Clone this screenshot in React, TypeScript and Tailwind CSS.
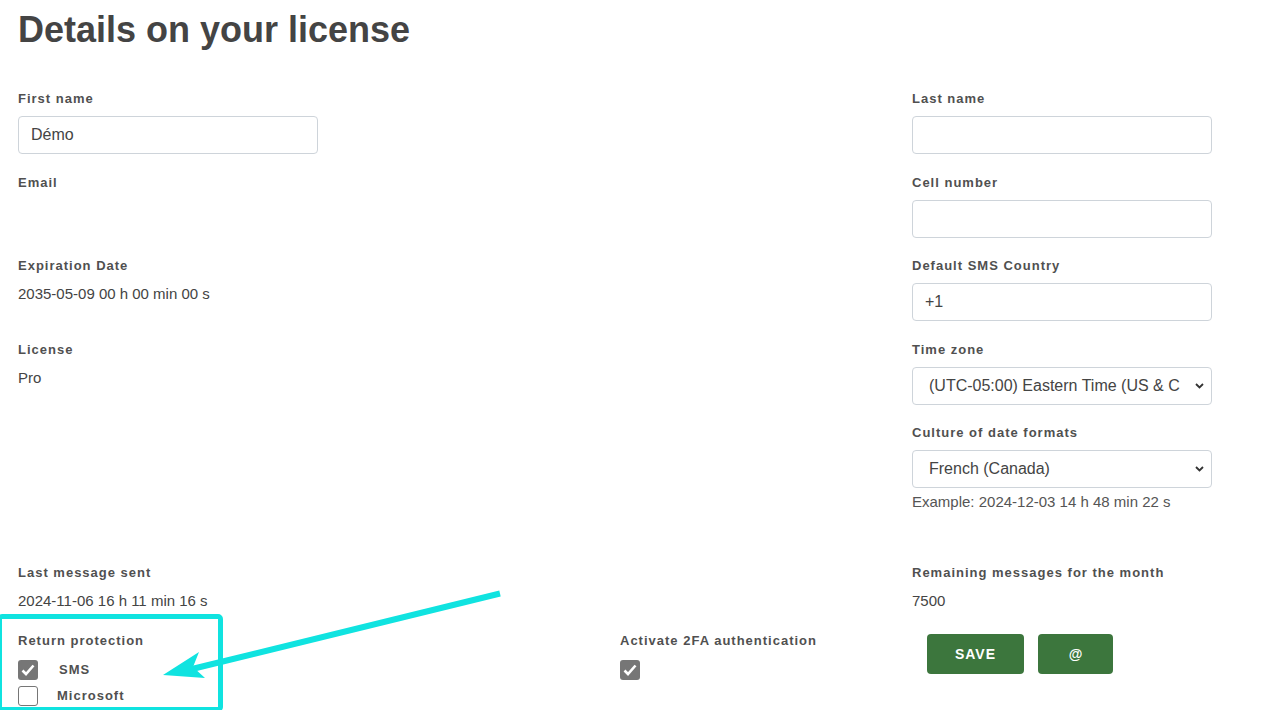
import React from 'react';

const FONT = 'font-["Liberation_Sans",Arial,sans-serif]';

function Label({ children, className = '' }: { children: React.ReactNode; className?: string }) {
  return (
    <div className={`text-[13px] leading-[18px] font-bold tracking-[1px] text-[#505050] ${className}`}>
      {children}
    </div>
  );
}

function TextInput({ value = '' }: { value?: string }) {
  return (
    <div className="h-[38px] w-[300px] rounded-[4px] border border-[#ced4da] bg-white px-[12px] flex items-center text-[16px] text-[#444]">
      {value}
    </div>
  );
}

function Chevron() {
  return (
    <svg width="9" height="6" viewBox="0 0 9 6" className="shrink-0">
      <path d="M1 1 L4.5 4.5 L8 1" fill="none" stroke="#333" strokeWidth="1.8" />
    </svg>
  );
}

function Select({ value }: { value: string }) {
  return (
    <div className="h-[38px] w-[300px] rounded-[4px] border border-[#ced4da] bg-white pl-[16px] pr-[7px] flex items-center text-[16px] text-[#444]">
      <div className="flex-1 overflow-hidden whitespace-nowrap mr-[15px]">{value}</div>
      <Chevron />
    </div>
  );
}

function Checkbox({ checked }: { checked: boolean }) {
  if (checked) {
    return (
      <div className="w-[20px] h-[20px] rounded-[3px] bg-[#767676] flex items-center justify-center shrink-0">
        <svg width="14" height="12" viewBox="0 0 14 12">
          <path d="M1.5 6.5 L5 10 L12.5 1.5" fill="none" stroke="#fff" strokeWidth="2.6" />
        </svg>
      </div>
    );
  }
  return <div className="w-[20px] h-[20px] rounded-[3px] border border-[#767676] bg-white shrink-0" />;
}

function Value({ children }: { children: React.ReactNode }) {
  return <div className="text-[15px] leading-[22px] text-[#444]">{children}</div>;
}

function Row({ left, right }: { left: React.ReactNode; right: React.ReactNode }) {
  return (
    <div className="flex pb-[19.5px]">
      <div className="w-[894px]">{left}</div>
      <div className="w-[300px]">{right}</div>
    </div>
  );
}

export default function App() {
  return (
    <div className={`relative min-h-[710px] overflow-hidden bg-white text-[#444] ${FONT}`}>
      <div className="pl-[18px]">
        <h1 className="pt-[9px] text-[36px] leading-[42px] font-bold text-[#444]">Details on your license</h1>

        <div className="pt-[39px]">
          <Row
            left={<><Label className="mb-[8px]">First name</Label><TextInput value="Démo" /></>}
            right={<><Label className="mb-[8px]">Last name</Label><TextInput /></>}
          />
          <Row
            left={<Label>Email</Label>}
            right={<><Label className="mb-[8px]">Cell number</Label><TextInput /></>}
          />
          <Row
            left={<><Label className="mb-[8px]">Expiration Date</Label><Value>2035-05-09 00 h 00 min 00 s</Value></>}
            right={<><Label className="mb-[8px]">Default SMS Country</Label><TextInput value="+1" /></>}
          />
          <Row
            left={<><Label className="mb-[8px]">License</Label><Value>Pro</Value></>}
            right={<><Label className="mb-[8px]">Time zone</Label><Select value="(UTC-05:00) Eastern Time (US & Canada)" /></>}
          />
          <div className="flex">
            <div className="w-[894px]" />
            <div className="w-[300px]">
              <Label className="mb-[8px]">Culture of date formats</Label>
              <Select value="French (Canada)" />
              <div className="mt-[3px] text-[15px] leading-[22px] text-[#555]">Example: 2024-12-03 14 h 48 min 22 s</div>
            </div>
          </div>

          <div className="flex pt-[51px]">
            <div className="w-[894px]">
              <Label className="mb-[8px]">Last message sent</Label>
              <Value>2024-11-06 16 h 11 min 16 s</Value>
            </div>
            <div className="w-[300px]">
              <Label className="mb-[8px]">Remaining messages for the month</Label>
              <Value>7500</Value>
            </div>
          </div>

          <div className="flex pt-[20px]">
            <div className="w-[602px]">
              <Label className="mb-[10px]">Return protection</Label>
              <div className="flex items-center h-[20px]">
                <Checkbox checked />
                <span className="ml-[21px] text-[13px] font-bold tracking-[1px] text-[#505050]">SMS</span>
              </div>
              <div className="flex items-center h-[20px] mt-[6px]">
                <Checkbox checked={false} />
                <span className="ml-[19px] text-[13px] font-bold tracking-[1px] text-[#505050]">Microsoft</span>
              </div>
            </div>
            <div className="w-[292px]">
              <Label className="mb-[10px]">Activate 2FA authentication</Label>
              <Checkbox checked />
            </div>
            <div className="w-[300px] pl-[15px] pt-[2px] flex gap-[14px]">
              <button className="h-[40px] w-[97px] rounded-[4px] bg-[#3c763d] text-white text-[14px] font-bold tracking-[1px]">SAVE</button>
              <button className="h-[40px] w-[75px] rounded-[4px] bg-[#3c763d] text-white text-[14px] font-bold">@</button>
            </div>
          </div>
        </div>
      </div>

      {/* annotation overlay */}
      <div className="absolute left-[-3px] top-[614px] w-[226px] h-[98px] border-[5px] border-[#10e3e0] rounded-[5px] pointer-events-none" />
      <svg className="absolute left-0 top-0 pointer-events-none" width="1281" height="710">
        <line x1="500" y1="593.5" x2="192" y2="669" stroke="#10e3e0" strokeWidth="6" />
        <polygon points="163,675 199,652 193,667 205,678" fill="#10e3e0" />
      </svg>
    </div>
  );
}
